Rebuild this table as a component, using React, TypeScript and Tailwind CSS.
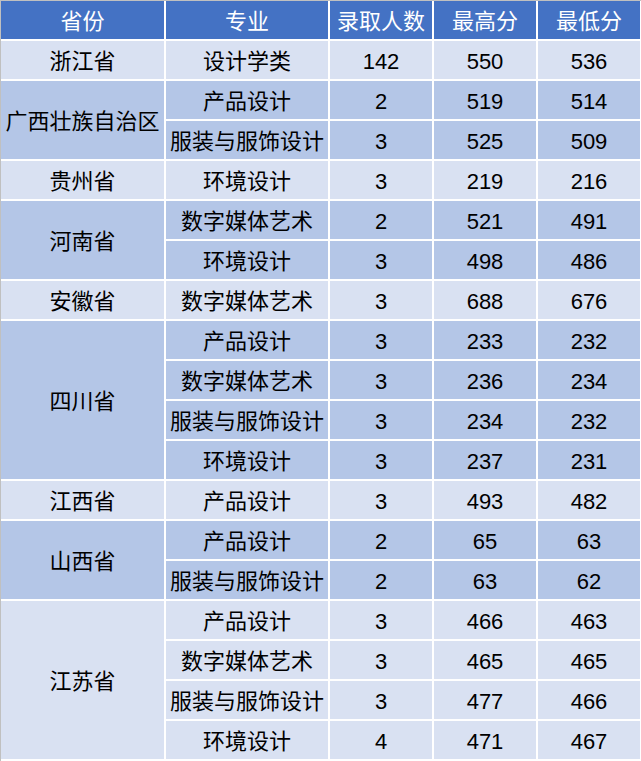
import { Fragment } from 'react'

const groups: { province: string; rows: [string, number, number, number][] }[] = [
  { province: '浙江省', rows: [['设计学类', 142, 550, 536]] },
  {
    province: '广西壮族自治区',
    rows: [
      ['产品设计', 2, 519, 514],
      ['服装与服饰设计', 3, 525, 509],
    ],
  },
  { province: '贵州省', rows: [['环境设计', 3, 219, 216]] },
  {
    province: '河南省',
    rows: [
      ['数字媒体艺术', 2, 521, 491],
      ['环境设计', 3, 498, 486],
    ],
  },
  { province: '安徽省', rows: [['数字媒体艺术', 3, 688, 676]] },
  {
    province: '四川省',
    rows: [
      ['产品设计', 3, 233, 232],
      ['数字媒体艺术', 3, 236, 234],
      ['服装与服饰设计', 3, 234, 232],
      ['环境设计', 3, 237, 231],
    ],
  },
  { province: '江西省', rows: [['产品设计', 3, 493, 482]] },
  {
    province: '山西省',
    rows: [
      ['产品设计', 2, 65, 63],
      ['服装与服饰设计', 2, 63, 62],
    ],
  },
  {
    province: '江苏省',
    rows: [
      ['产品设计', 3, 466, 463],
      ['数字媒体艺术', 3, 465, 465],
      ['服装与服饰设计', 3, 477, 466],
      ['环境设计', 4, 471, 467],
    ],
  },
]

const headers = ['省份', '专业', '录取人数', '最高分', '最低分']

export default function App() {
  return (
    <div className="w-[641px] h-[761px] overflow-hidden bg-white border-t border-l border-[#c0c0c0]">
      <div
        className="grid grid-cols-[163px_162px_102px_102px_102px] auto-rows-[38px] gap-[2px] text-[22px] text-black"
        style={{ fontFamily: '"Liberation Sans", "Noto Sans CJK SC", sans-serif' }}
      >
        {headers.map((h) => (
          <div key={h} className="flex items-center justify-center pt-[2px] bg-[#4472c4] text-white">
            {h}
          </div>
        ))}
        {groups.map((g, gi) => {
          const bg = gi % 2 === 0 ? 'bg-[#d9e1f2]' : 'bg-[#b4c6e7]'
          return g.rows.map((r, ri) => (
            <Fragment key={`${g.province}-${ri}`}>
              {ri === 0 && (
                <div
                  className={`flex items-center justify-center pt-[3px] whitespace-nowrap ${bg}`}
                  style={{ gridRow: `span ${g.rows.length}` }}
                >
                  {g.province}
                </div>
              )}
              <div className={`flex items-center justify-center pt-[3px] whitespace-nowrap ${bg}`}>{r[0]}</div>
              <div className={`flex items-center justify-center pt-[3px] ${bg}`}>{r[1]}</div>
              <div className={`flex items-center justify-center pt-[3px] ${bg}`}>{r[2]}</div>
              <div className={`flex items-center justify-center pt-[3px] ${bg}`}>{r[3]}</div>
            </Fragment>
          ))
        })}
      </div>
    </div>
  )
}
